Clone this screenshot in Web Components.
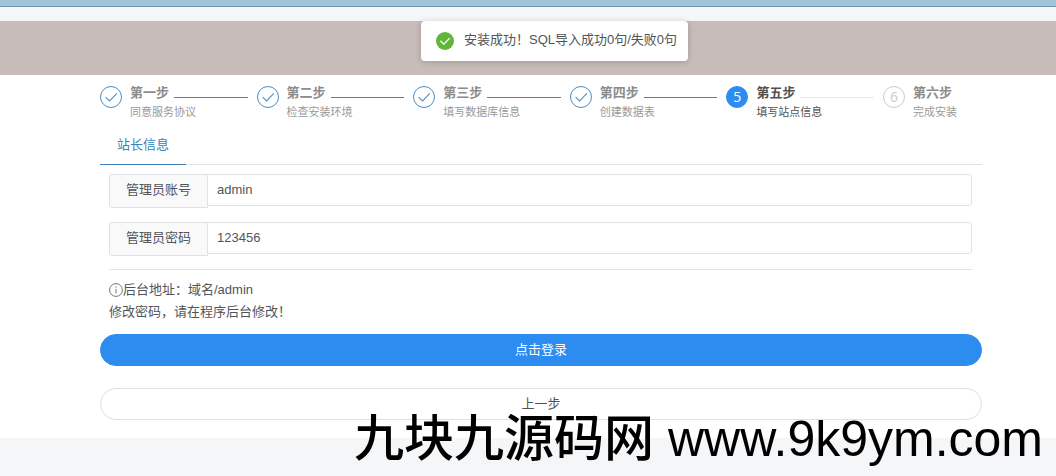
<!DOCTYPE html>
<html lang="zh-CN">
<head>
<meta charset="utf-8">
<meta name="viewport" content="width=device-width, initial-scale=1">
<title>填写站点信息</title>
<style>
html { background: #f5f6f8; }
body { margin: 0; font: 13px/22px "Liberation Sans", "Noto Sans CJK SC", sans-serif; color: #515558; }
</style>
</head>
<body>
<install-page>
  <toast-message slot="toast">安装成功！SQL导入成功0句/失败0句</toast-message>
  <install-steps slot="steps">
    <install-step state="done" label="第一步">同意服务协议</install-step>
    <install-step state="done" label="第二步">检查安装环境</install-step>
    <install-step state="done" label="第三步">填写数据库信息</install-step>
    <install-step state="done" label="第四步">创建数据表</install-step>
    <install-step state="current" number="5" label="第五步">填写站点信息</install-step>
    <install-step state="wait" number="6" label="第六步" last>完成安装</install-step>
  </install-steps>
  <tab-bar>站长信息</tab-bar>
  <field-list>
    <text-field label="管理员账号" value="admin"></text-field>
    <text-field label="管理员密码" value="123456"></text-field>
  </field-list>
  <info-note>
    <span slot="address">后台地址：域名/admin</span>
    <span slot="hint">修改密码，请在程序后台修改！</span>
  </info-note>
  <button-stack>
    <pill-button primary>点击登录</pill-button>
    <pill-button>上一步</pill-button>
  </button-stack>
  <site-mark slot="mark">九块九源码网 www.9k9ym.com</site-mark>
</install-page>

<script>
function define(name, html, setup) {
  const template = document.createElement('template');
  template.innerHTML = html;
  customElements.define(name, class extends HTMLElement {
    constructor() {
      super();
      this.attachShadow({ mode: 'open' }).append(template.content.cloneNode(true));
    }
    connectedCallback() {
      if (setup) setup(this, this.shadowRoot);
    }
  });
}

define('install-page', `
<style>
  :host { display: block; position: relative; min-height: 100vh; }
  .strip { height: 6px; background: #a1c5d8; border-bottom: 1px solid #7495a6; }
  header { margin-top: 14px; height: 54px; background: #c8bcba; }
  main { background: #fff; padding: 8px 74px 18px 100px; }
</style>
<div class="strip"></div>
<header><slot name="toast"></slot></header>
<main><slot name="steps"></slot><slot></slot></main>
<slot name="mark"></slot>`);

define('toast-message', `
<style>
  :host { position: absolute; top: 21px; left: 421px; display: flex; gap: 10px;
    box-sizing: border-box; height: 40px; padding: 0 11px 0 15px; background: #fff; border-radius: 4px;
    box-shadow: 0 1px 6px rgba(0,0,0,.2); white-space: nowrap; line-height: 38px; }
  svg { width: 18px; height: 18px; flex: none; align-self: center; }
</style>
<svg viewBox="0 0 18 18" aria-hidden="true"><circle cx="9" cy="9" r="9" fill="#62b53b"/><path d="M4.4 8.8 7.8 12.2 13.6 6.3" fill="none" stroke="#fff" stroke-width="1.3"/></svg>
<span role="status"><slot></slot></span>`);

define('install-steps', `
<style>
  :host { display: flex; }
  ::slotted(install-step) { flex: 1 1 0; min-width: 0; }
  ::slotted(install-step[last]) { flex: 0 0 99px; }
</style>
<slot></slot>`);

define('install-step', `
<style>
  :host { display: flex; gap: 8px; color: #999; --line: #3b86c4; }
  .icon { box-sizing: border-box; width: 22px; height: 22px; margin-top: 3px; flex: none; display: flex;
    align-items: center; justify-content: center; border: 1px solid #4c8dc6; border-radius: 50%;
    font: 14px/20px "Open Sans", sans-serif; }
  svg { width: 20px; height: 20px; }
  .text { flex: 1; min-width: 0; }
  .title { display: flex; align-items: center; gap: 5px; height: 20px; font-weight: bold; white-space: nowrap; }
  .title::after { content: ""; flex: 1; height: 1px; margin: 8px 9px 0 0; background: var(--line); }
  .desc { font-size: 11px; line-height: 18px; white-space: nowrap; }
  :host([state=done]) .title, :host([state=wait]) .title { color: #8c8c8c; }
  :host([state=current]) { color: #515151; --line: #e6e7ea; }
  :host([state=current]) .icon { background: #2d8cf0; border-color: #2d8cf0; color: #fff; }
  :host([state=wait]) .icon { border-color: #ccc; color: #ccc; }
  :host([last]) .title::after { content: none; }
</style>
<div class="icon"></div>
<div class="text"><div class="title"><span></span></div><div class="desc"><slot></slot></div></div>`,
(host, root) => {
  root.querySelector('.title span').textContent = host.getAttribute('label');
  const icon = root.querySelector('.icon');
  if (host.getAttribute('state') === 'done') {
    icon.innerHTML = '<svg viewBox="0 0 20 20" aria-hidden="true"><path d="M4.6 10.2 8.6 14 15.8 6.4" fill="none" stroke="#5a8fbd" stroke-width="1.1"/></svg>';
  } else {
    icon.textContent = host.getAttribute('number');
  }
});

define('tab-bar', `
<style>
  :host { display: flex; margin-top: 4px; box-shadow: inset 0 -1px #dfe1e4; }
  button { font: inherit; line-height: 40px; height: 40px; padding: 0 17px; border: 0;
    border-bottom: 1px solid #3f83bd; background: none; color: #3583b8; }
</style>
<button type="button" role="tab" aria-selected="true"><slot></slot></button>`);

define('field-list', `
<style>
  :host { display: flex; flex-direction: column; gap: 14px; margin: 9px 10px 0 9px; padding-bottom: 13px;
    border-bottom: 1px solid #e1e3e6; }
</style>
<slot></slot>`);

define('text-field', `
<style>
  :host { display: flex; align-items: flex-start; }
  label, input { box-sizing: border-box; border: 1px solid #e0e2e5; }
  label { width: 99px; height: 34px; line-height: 30px; text-align: center; background: #f9f9fa;
    border-radius: 3px 0 0 3px; }
  input { flex: 1; min-width: 0; height: 32px; margin: 0 0 0 -1px; padding: 0 9px 2px; font: inherit;
    color: inherit; background: #fff; border-radius: 0 3px 3px 0; outline: 0; }
</style>
<label for="field"></label><input id="field" type="text">`,
(host, root) => {
  root.querySelector('label').textContent = host.getAttribute('label');
  root.querySelector('input').value = host.getAttribute('value');
});

define('info-note', `
<style>
  :host { display: block; margin: 9px 9px 0; }
  div { display: flex; align-items: center; height: 22px; }
  svg { width: 14px; height: 14px; flex: none; }
</style>
<div><svg viewBox="0 0 14 14" aria-hidden="true"><circle cx="7" cy="7" r="6.4" fill="none" stroke="#666" stroke-width=".9"/><path d="M7 6v4.4" fill="none" stroke="#777" stroke-width="1"/><circle cx="7" cy="4" r=".7" fill="#777"/></svg><slot name="address"></slot></div>
<div><slot name="hint"></slot></div>`);

define('button-stack', `
<style>
  :host { display: flex; flex-direction: column; gap: 22px; margin-top: 11px; }
</style>
<slot></slot>`);

define('pill-button', `
<style>
  :host { display: block; }
  button { display: block; box-sizing: border-box; width: 100%; height: 32px; padding: 0; font: inherit;
    line-height: 30px; color: inherit; background: #fff; border: 1px solid #dfe0e3; border-radius: 16px; }
  :host([primary]) button { color: #fff; background: #2d8cf0; border-color: #2d8cf0; }
</style>
<button type="button"><slot></slot></button>`);

define('site-mark', `
<style>
  :host { position: absolute; right: 13px; bottom: 8px; font-size: 50px; line-height: 58px; font-weight: 500;
    color: #000; white-space: nowrap; pointer-events: none; }
</style>
<slot></slot>`);
</script>
</body>
</html>
